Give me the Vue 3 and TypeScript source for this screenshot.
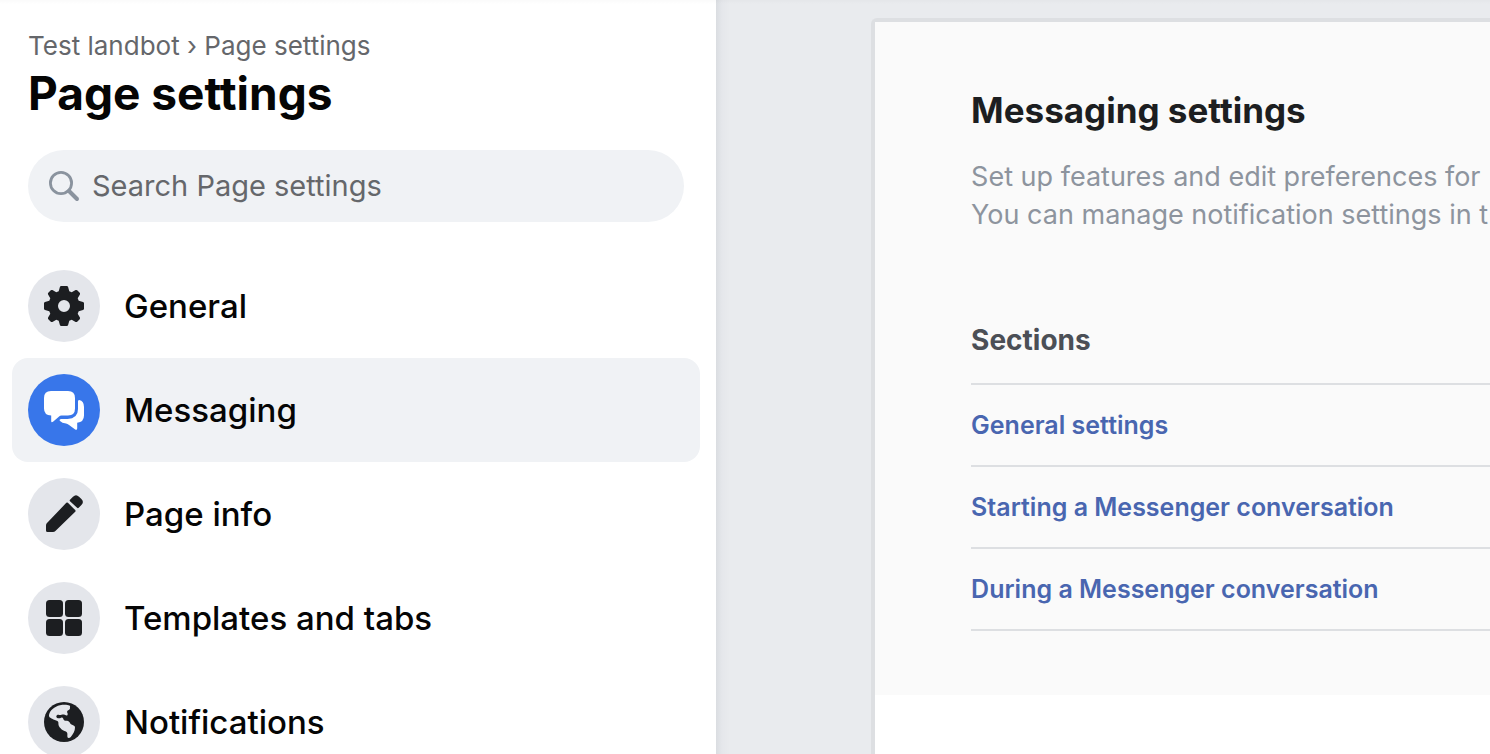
<script setup lang="ts">
import { ref } from 'vue'

type IconName = 'gear' | 'chat' | 'pencil' | 'grid' | 'globe'

interface NavItem {
  label: string
  icon: IconName
}

const navItems: NavItem[] = [
  { label: 'General', icon: 'gear' },
  { label: 'Messaging', icon: 'chat' },
  { label: 'Page info', icon: 'pencil' },
  { label: 'Templates and tabs', icon: 'grid' },
  { label: 'Notifications', icon: 'globe' },
]

const sections: string[] = [
  'General settings',
  'Starting a Messenger conversation',
  'During a Messenger conversation',
]

const active = ref('Messaging')
const query = ref('')
</script>

<template>
  <div class="page">
    <aside class="sidebar">
      <nav class="crumbs" aria-label="Breadcrumb">
        <a href="#">Test landbot</a> › <a href="#">Page settings</a>
      </nav>
      <h1 class="title">Page settings</h1>

      <label class="search">
        <svg class="search-icon" viewBox="0 0 32 32" aria-hidden="true">
          <circle cx="13" cy="13" r="10.6" fill="none" stroke="currentColor" stroke-width="2.8" />
          <path d="M21 21 29 29" fill="none" stroke="currentColor" stroke-width="4" stroke-linecap="round" />
        </svg>
        <input v-model="query" type="search" placeholder="Search Page settings" aria-label="Search Page settings" />
      </label>

      <nav class="menu" aria-label="Page settings">
        <button
          v-for="item in navItems"
          :key="item.label"
          type="button"
          class="item"
          :class="{ active: item.label === active }"
          @click="active = item.label"
        >
          <span class="badge">
            <svg viewBox="0 0 40 40" aria-hidden="true">
              <g v-if="item.icon === 'gear'" fill="currentColor">
                <path
                  fill-rule="evenodd"
                  d="M17.2 0h5.6q1 0 1.3 1l1.2 4.3 2.4 1 3.9-2.2q.9-.5 1.6.2l2.500 2.500q.7.7.2 1.600l-2.200 3.900 1 2.400 4.300 1.200q1 .3 1 1.300v5.600q0 1-1 1.300l-4.300 1.200-1 2.400 2.200 3.900q.5.9-.2 1.600l-2.500 2.500q-.7.7-1.600.2l-3.900-2.200-2.400 1-1.200 4.300q-.3 1-1.300 1h-5.600q-1 0-1.300-1l-1.200-4.300-2.400-1-3.900 2.200q-.9.5-1.600-.2l-2.500-2.500q-.7-.7-.2-1.600l2.200-3.900-1-2.400L1 24.100q-1-.3-1-1.300v-5.600q0-1 1-1.300l4.300-1.200 1-2.400-2.200-3.900q-.5-.9.2-1.600l2.500-2.500q.7-.7 1.600-.2l3.900 2.200 2.400-1L15.900 1q.3-1 1.300-1ZM20 14a6 6 0 1 0 0 12 6 6 0 0 0 0-12Z"
                />
              </g>
              <g v-else-if="item.icon === 'chat'" fill="currentColor">
                <path d="M7 1h17q7 0 7 7v10.500q0 7-7 7h-6.500q-1.500 0-2.700 1.200L9 31.700q-1.800 1.200-1.800-.8v-5.400Q0 25.300 0 18.500V8q0-7 7-7Z" />
                <path d="M35.200 10Q40 11 40 17v8.500q0 6.500-6.800 7.300v5.400q0 2.300-2 1.300l-6.500-4.800q-1.200-1-2.700-1.200-4-.4-6-2.500-1.200-1.400 1-2h6.500Q34 28.500 34 19v-7.500q0-1.700 1.200-1.500Z" />
              </g>
              <g v-else-if="item.icon === 'pencil'" fill="currentColor">
                <path d="m23.900 8.800 7.300 7.300q.8.800 0 1.600L11.400 37q-1 1-2.400 1H3.500Q2 38 2 36.500v-5q0-1.400 1-2.400L22.300 8.800q.8-.8 1.600 0Z" />
                <path d="M26 5.700 29 2.700q3-3 6 0l2.400 2.400q3 3 0 6l-2.700 2.700q-.8.800-1.600 0L26 7.200q-.8-.7 0-1.500Z" />
              </g>
              <g v-else-if="item.icon === 'grid'" fill="currentColor">
                <rect x="2" y="2" width="17" height="17" rx="3.500" />
                <rect x="21" y="2" width="17" height="17" rx="3.500" />
                <rect x="2" y="21" width="17" height="17" rx="3.500" />
                <rect x="21" y="21" width="17" height="17" rx="3.500" />
              </g>
              <g v-else>
                <circle cx="20" cy="20" r="20" fill="currentColor" />
                <path
                  class="land"
                  d="M5 13C5.500 8.500 10.500 4.500 16 3.200c3.500-.8 7.500-.6 9.400.2 1.300.7.300 1.900.6 3.100.1 1.300-2.400 1.500-2.900 3 -.4 1.200 1.200 2 .4 3.400-.6 1.100-2.300.2-3.500-.3-1.500-.6-3.500.9-4.800.4-1.300-.4-2.800 0-2.900 1.500 0 1.400 1.300 1.800 2.900 1.800 1.400.1 1.400-1.100 2.900-.8 1.400.3 1 2.200 2.300 2.900 1.400.5 3.500-.2 4.900 1.500 1 1.200 1.200 2.200 2.700 2.900 1.500.7 2.900.9 3 2.700.1 3.300-2 6.800-4.200 9.400-1 1.100-2.800 1.500-3.300.3-.5-1.300.4-2.800-.5-4.600-.9-1.700-4-1.800-5.300-3.100-1.500-1.600-3-2.700-3.200-4.700-.2-1.700.3-3-1.100-3.800-1.500-.8-3.600-.8-5.300-2.200C6.500 15.600 4.800 15.500 5 13Z"
                />
              </g>
            </svg>
          </span>
          <span>{{ item.label }}</span>
        </button>
      </nav>
    </aside>

    <main class="content">
      <section class="card">
        <div class="panel">
          <h2 class="heading">Messaging settings</h2>
          <p class="lead">
            Set up features and edit preferences for<br />You can manage notification settings in t
          </p>
          <h3 class="subheading">Sections</h3>
          <ul class="links">
            <li v-for="section in sections" :key="section">
              <a href="#">{{ section }}</a>
            </li>
          </ul>
        </div>
      </section>
    </main>
  </div>
</template>

<style>
body {
  margin: 0;
}
</style>

<style scoped>
.page {
  position: relative;
  display: flex;
  height: 100vh;
  overflow: hidden;
  background: #e9ebee;
  color: #050505;
  font-family: Inter, "Liberation Sans", sans-serif;
}

.page::before {
  content: "";
  position: absolute;
  z-index: 2;
  inset: 0 0 auto;
  height: 4px;
  background: linear-gradient(rgba(0, 0, 0, 0.02), transparent);
}

a {
  color: inherit;
  text-decoration: none;
}

.sidebar {
  position: relative;
  z-index: 1;
  box-sizing: border-box;
  flex: 0 0 48.06%;
  padding: 30px 16px 0 12px;
  overflow: hidden;
  background: #fff;
}

.crumbs {
  padding-left: 16px;
  color: #65676b;
  font-size: 26px;
  line-height: 32px;
  white-space: nowrap;
}

.title {
  margin: 4px 0 0;
  padding-left: 16px;
  font-size: 46px;
  font-weight: 700;
  line-height: 54px;
  white-space: nowrap;
}

.search {
  display: flex;
  align-items: center;
  gap: 12px;
  height: 72px;
  margin: 30px 16px 32px;
  padding: 0 20px;
  box-sizing: border-box;
  border-radius: 36px;
  background: #f0f2f5;
}

.search-icon {
  flex: none;
  width: 32px;
  height: 32px;
  color: #8a939e;
}

.search input {
  flex: 1;
  min-width: 0;
  padding: 0;
  border: 0;
  outline: 0;
  background: transparent;
  color: #050505;
  font: inherit;
  font-size: 29px;
  line-height: 40px;
}

.search input::placeholder {
  color: #65676b;
  opacity: 1;
}

.menu {
  display: flex;
  flex-direction: column;
}

.item {
  display: flex;
  align-items: center;
  gap: 24px;
  padding: 16px;
  border: 0;
  border-radius: 16px;
  background: transparent;
  color: #050505;
  font: inherit;
  font-size: 33px;
  font-weight: 500;
  line-height: 40px;
  text-align: left;
  white-space: nowrap;
  cursor: pointer;
}

.item.active {
  background: #f0f2f5;
}

.badge {
  display: flex;
  flex: none;
  align-items: center;
  justify-content: center;
  width: 72px;
  height: 72px;
  border-radius: 50%;
  background: #e4e6eb;
  color: #1c1e21;
}

.active .badge {
  background: #3876ea;
  color: #fff;
}

.badge svg {
  width: 40px;
  height: 40px;
}

.land {
  fill: #e4e6eb;
}

.content {
  flex: 1;
  min-width: 0;
  padding: 18px 0 0 155px;
  overflow: hidden;
  background: linear-gradient(90deg, #dadde1, #e5e7eb 6px, #e9ebee 14px);
}

.card {
  box-sizing: border-box;
  height: 100%;
  border: solid #dddfe2;
  border-width: 4px 0 0 4px;
  border-radius: 6px 0 0 0;
  background: #fff;
}

.panel {
  padding: 64px 0 64px 96px;
  background: #fafafa;
  white-space: nowrap;
}

.heading {
  margin: 0;
  color: #1c1e21;
  font-size: 35px;
  font-weight: 700;
  line-height: 48px;
}

.lead {
  margin: 24px 0 0;
  color: #8d949e;
  font-size: 27px;
  line-height: 38px;
}

.subheading {
  margin: 88px 0 0;
  color: #4b4f56;
  font-size: 28px;
  font-weight: 700;
  line-height: 36px;
}

.links {
  margin: 25px 0 0;
  padding: 0;
  border-top: 2px solid #dddfe2;
  list-style: none;
}

.links li {
  padding: 24px 0;
  border-bottom: 2px solid #dddfe2;
  color: #4966b0;
  font-size: 25px;
  font-weight: 600;
  line-height: 32px;
}
</style>
